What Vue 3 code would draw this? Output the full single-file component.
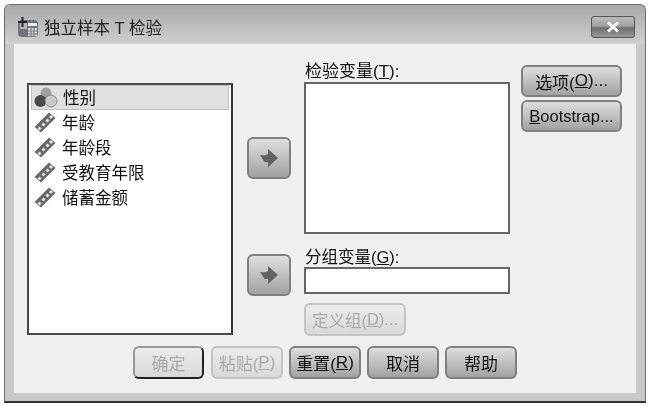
<script setup>
const variables = [
  { name: '性别', type: 'nominal' },
  { name: '年龄', type: 'scale' },
  { name: '年龄段', type: 'scale' },
  { name: '受教育年限', type: 'scale' },
  { name: '储蓄金额', type: 'scale' },
];
</script>

<template>
  <div class="window">
    <div class="titlebar">
      <svg class="app-icon" width="24" height="24" viewBox="0 0 24 24">
        <rect x="2" y="5" width="20" height="17" rx="4" fill="#6f7478" />
        <rect x="4" y="7" width="7" height="7" fill="#b5b5b5" />
        <rect x="12" y="8" width="9" height="3" fill="#eee" />
        <rect x="12" y="13" width="9" height="8" fill="#d8d8d8" />
        <path d="M12 16h9M12 19h9M15 13v8M18 13v8" stroke="#777" stroke-width="1" />
        <path d="M2 7h9M6.500 2v10" stroke="#222" stroke-width="2" fill="none" />
      </svg>
      <span class="title">独立样本 T 检验</span>
      <button class="close">
        <svg width="14" height="12" viewBox="0 0 14 12">
          <path d="M2 1.500l10 9M12 1.500l-10 9" stroke="#fff" stroke-width="3" />
        </svg>
      </button>
    </div>

    <div class="client">
      <div class="main">
        <ul class="var-list">
          <li v-for="(v, i) in variables" :key="v.name" class="var-item" :class="{ selected: i === 0 }">
            <svg v-if="v.type === 'nominal'" class="var-icon" width="24" height="22" viewBox="0 0 24 22">
              <circle cx="12" cy="7" r="5.500" fill="#a0a0a0" />
              <circle cx="6.500" cy="15" r="6" fill="#4a4a4a" />
              <circle cx="17" cy="15" r="6" fill="#cacaca" stroke="#777" stroke-width="0.8" />
            </svg>
            <svg v-else class="var-icon" width="24" height="22" viewBox="0 0 24 22">
              <path d="M1.500 16L16 1.500l6.500 5.500L8 21.500z" fill="#686868" />
              <path d="M5.500 16.500l2 2M9.500 12.500l2 2M13.500 8.500l2 2M17 5l2 2" stroke="#e4e4e4" stroke-width="3" />
            </svg>
            <span>{{ v.name }}</span>
          </li>
        </ul>

        <div class="arrows">
          <button v-for="n in 2" :key="n" class="btn arrow">
            <svg width="20" height="20" viewBox="0 0 20 20">
              <path d="M1 7c3 .5 6 .5 8-1V1l10 9-10 9v-5H5.500z" fill="#626262" />
            </svg>
          </button>
        </div>

        <div class="targets">
          <label class="field-label">检验变量(<u>T</u>):</label>
          <div class="test-box"></div>
          <label class="field-label group-label">分组变量(<u>G</u>):</label>
          <div class="group-box"></div>
          <button class="btn define" disabled>定义组(<u>D</u>)...</button>
        </div>

        <div class="side">
          <button class="btn side-btn">选项(<u>O</u>)...</button>
          <button class="btn side-btn boot"><u>B</u>ootstrap...</button>
        </div>
      </div>

      <div class="footer">
        <button class="btn foot ok" disabled>确定</button>
        <button class="btn foot paste" disabled>粘贴(<u>P</u>)</button>
        <button class="btn foot">重置(<u>R</u>)</button>
        <button class="btn foot">取消</button>
        <button class="btn foot">帮助</button>
      </div>
    </div>
  </div>
</template>

<style scoped>
.window {
  box-sizing: border-box;
  width: 642px;
  height: 399px;
  margin: 4px 0 0 4px;
  display: flex;
  flex-direction: column;
  background: #c9c9c9;
  border: 1px solid #6a6a6a;
  border-bottom: 2px solid #333;
  border-radius: 6px 6px 0 0;
  font-family: "Liberation Sans", "Noto Sans CJK SC", sans-serif;
  color: #111;
  filter: blur(0.5px);
}

.titlebar {
  height: 39px;
  flex: none;
  display: flex;
  align-items: center;
  padding: 5px 10px 0 11px;
  box-sizing: border-box;
  background: linear-gradient(#a9a9a9, #cfcfcf);
  border-radius: 5px 5px 0 0;
}

.app-icon {
  margin-right: 4px;
}

.title {
  font-size: 16.500px;
  flex: 1;
  color: #222;
}

.close {
  width: 44px;
  height: 22px;
  padding: 0;
  display: flex;
  align-items: center;
  justify-content: center;
  border: 1px solid #555;
  border-radius: 3px;
  background: linear-gradient(#bbb 0%, #a2a2a2 45%, #6e6e6e 55%, #999 100%);
}

.client {
  flex: 1;
  margin: 0 9px 8px 9px;
  background: #f0f0f0;
  display: flex;
  flex-direction: column;
  padding: 16px 0 0 13px;
}

.main {
  display: flex;
  height: 286px;
}

.var-list {
  box-sizing: border-box;
  width: 206px;
  height: 252px;
  margin: 23px 14px 0 0;
  padding: 0 2px;
  list-style: none;
  background: #fff;
  border: 2px solid #4a4a4a;
  border-right-color: #333;
}

.var-item {
  height: 25px;
  display: flex;
  align-items: center;
  gap: 5px;
  padding: 0 0 2px 2px;
  font-size: 16.500px;
  box-sizing: border-box;
}

.var-icon {
  flex: none;
}

.var-item.selected {
  background: #e0e0e0;
  border: 1px solid #c0c0c0;
}

.btn {
  padding: 0;
  font-family: inherit;
  color: #111;
  border: 2px solid #808080;
  border-radius: 6px;
  background: linear-gradient(#dedede, #a2a2a2);
  display: flex;
  align-items: center;
  justify-content: center;
  box-sizing: border-box;
  white-space: nowrap;
}

.btn:disabled {
  color: #a9a9a9;
  border-color: #c4c4c4;
  background: linear-gradient(#ececec, #d9d9d9);
}

.arrows {
  width: 44px;
  margin-right: 13px;
  padding-top: 77px;
  display: flex;
  flex-direction: column;
  gap: 75px;
}

.arrow {
  width: 44px;
  height: 42px;
}

.targets {
  width: 206px;
  margin-right: 11px;
  display: flex;
  flex-direction: column;
}

.field-label {
  font-size: 17px;
  height: 22px;
  line-height: 24px;
  padding-left: 1px;
}

.test-box {
  box-sizing: border-box;
  height: 152px;
  background: #fff;
  border: 2px solid #666;
}

.group-label {
  margin-top: 11px;
  font-size: 16.500px;
}

.group-box {
  box-sizing: border-box;
  height: 27px;
  background: #fff;
  border: 2px solid #666;
}

.define {
  width: 102px;
  height: 33px;
  margin-top: 9px;
  font-size: 16.500px;
}

.side {
  padding-top: 5px;
  display: flex;
  flex-direction: column;
  gap: 3px;
}

.side-btn {
  width: 101px;
  height: 32px;
  font-size: 17px;
}

.side-btn.boot {
  font-size: 16.500px;
}

.footer {
  display: flex;
  gap: 6px;
  padding-left: 106px;
}

.foot {
  width: 72px;
  height: 33px;
  font-size: 17px;
}

.foot.ok {
  width: 71px;
  border-color: #999 #222 #222 #999;
}

.foot.paste {
  margin-left: 1px;
}
</style>

<style>
body {
  background: #fff;
}
</style>
